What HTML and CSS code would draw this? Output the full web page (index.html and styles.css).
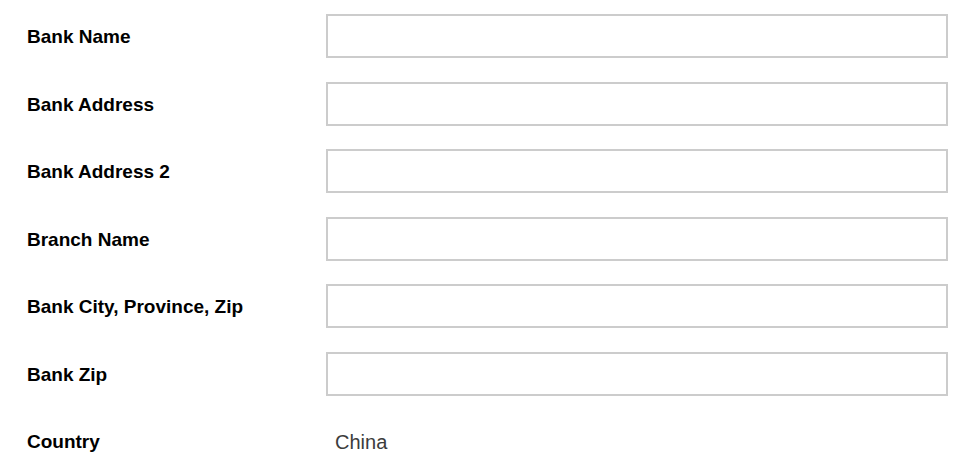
FILE: index.html
```html
<!DOCTYPE html>
<html>
<head>
<meta charset="utf-8">
<link rel="stylesheet" href="styles.css">
</head>
<body>
<form class="bank-form">
  <div class="row"><label class="label">Bank Name</label><input class="field" type="text"></div>
  <div class="row"><label class="label">Bank Address</label><input class="field" type="text"></div>
  <div class="row"><label class="label">Bank Address 2</label><input class="field" type="text"></div>
  <div class="row"><label class="label">Branch Name</label><input class="field" type="text"></div>
  <div class="row"><label class="label">Bank City, Province, Zip</label><input class="field" type="text"></div>
  <div class="row"><label class="label">Bank Zip</label><input class="field" type="text"></div>
  <div class="row"><label class="label">Country</label><div class="value">China</div></div>
</form>
</body>
</html>
```
FILE: styles.css
```css
html, body {
  margin: 0;
  padding: 0;
  background: #fff;
}
.bank-form {
  padding: 14px 23px 0 27px;
  font-family: "Liberation Sans", Arial, sans-serif;
  display: flex;
  flex-direction: column;
  gap: 23.5px;
}
.row {
  display: grid;
  grid-template-columns: 299px 622px;
  align-items: center;
  height: 44px;
}
.label {
  font-size: 19px;
  font-weight: bold;
  color: #000;
  padding-top: 2px;
}
.field {
  box-sizing: border-box;
  width: 622px;
  height: 44px;
  border: 2px solid #ccc;
  background: #fff;
  margin: 0;
  padding: 0 8px;
  font: inherit;
  outline: none;
}
.value {
  font-size: 20px;
  color: #3c3c3c;
  padding-left: 9px;
  padding-top: 2px;
}
```
